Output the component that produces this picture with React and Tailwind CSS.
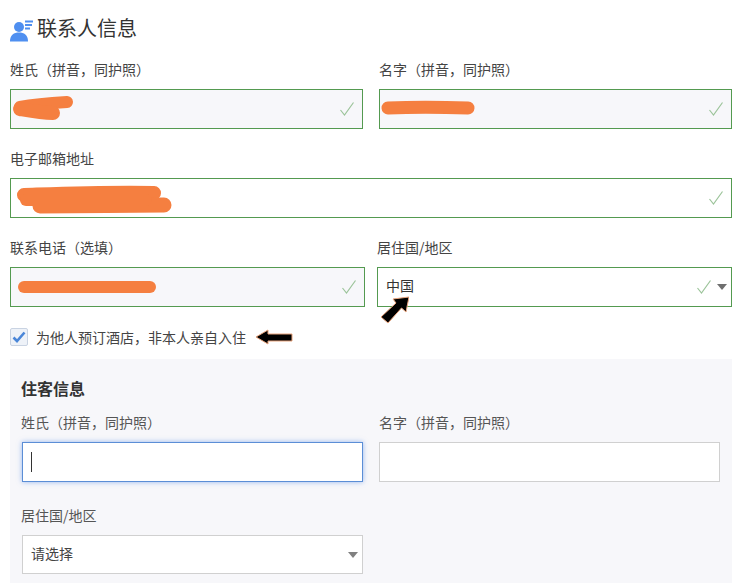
import { useState } from 'react'

const FONT = 'font-["Microsoft_YaHei","Noto_Sans_CJK_SC",sans-serif]'

const NAME_LABEL = '姓氏（拼音，同护照）'
const GIVEN_LABEL = '名字（拼音，同护照）'

function Check() {
  return (
    <svg width="16" height="16" viewBox="0 0 16 16" fill="none" className="shrink-0">
      <path d="M1.5 9 L5.5 14 L14.5 1.5" stroke="#9cc49a" strokeWidth="1.2" />
    </svg>
  )
}

function Caret({ color = '#6f6f6f' }) {
  return (
    <svg width="10" height="6" viewBox="0 0 10 6" className="shrink-0">
      <path d="M0 0 H10 L5 6 Z" fill={color} />
    </svg>
  )
}

// orange marker strokes hiding personal data
function Scribble({ className, width, height, children }) {
  return (
    <svg
      width={width}
      height={height}
      viewBox={`0 0 ${width} ${height}`}
      fill="none"
      stroke="#f57f40"
      strokeLinecap="round"
      className={`absolute blur-[0.6px] ${className}`}
    >
      {children}
    </svg>
  )
}

function Field({ label, filled, select, children, className = '' }) {
  return (
    <div className={`flex flex-col ${className}`}>
      <label className="h-5 leading-5 text-sm text-[#444]">{label}</label>
      <div
        className={`relative mt-[10px] h-10 flex items-center border border-[#549a50] pl-2 text-sm text-[#333] ${filled ? 'bg-[#f7f7fa]' : 'bg-white'} ${select ? 'gap-[5px] pr-[4px]' : 'pr-[7px]'}`}
      >
        <span className="flex-1 pb-[5px]">{children}</span>
        <Check />
        {select && <Caret />}
      </div>
    </div>
  )
}

function PlainField({ label, focused, select, indent = true, children, className = '' }) {
  return (
    <div className={`flex flex-col ${className}`}>
      <label className={`h-5 leading-5 text-sm text-[#555] ${indent ? '-ml-px' : ''}`}>{label}</label>
      <div
        className={`mt-[10px] flex items-center bg-white border pl-2 pr-[4px] text-sm text-[#444] ${select ? 'h-[39px]' : 'h-10'} ${focused ? 'border-[#5b8ed6] shadow-[0_0_5px_rgba(70,130,230,0.55)]' : 'border-[#d0d0d0]'}`}
      >
        {focused ? children : <span className="flex-1 pb-[3px]">{children}</span>}
        {select && <Caret color="#808080" />}
      </div>
    </div>
  )
}

export default function App() {
  const [forOther, setForOther] = useState(true)

  return (
    <div className={`w-[732px] h-[583px] overflow-hidden bg-white pl-[10px] ${FONT}`}>
      <div className="h-[59px] pb-[3px] flex items-center gap-[5px]">
        <svg width="23" height="22" viewBox="0 0 23 22" className="shrink-0 mt-[5px]">
          <circle cx="9" cy="7" r="5" fill="#4f8ff0" />
          <path d="M0 21 C0 15 4 12.5 9 12.5 C14 12.5 18 15 18 21 V21.5 H0 Z" fill="#4f8ff0" />
          <rect x="15" y="0.5" width="8" height="2" fill="#4f8ff0" />
          <rect x="15" y="4" width="7" height="2" fill="#4f8ff0" />
          <rect x="15" y="7.5" width="5" height="2" fill="#4f8ff0" />
        </svg>
        <h1 className="-ml-px text-xl text-[#333]">联系人信息</h1>
      </div>

      <div className="flex flex-col gap-[19px]">
        <div className="flex gap-4">
          <Field label={NAME_LABEL} filled className="w-[353px]">
            <Scribble className="left-0 top-[6px]" width="66" height="26">
              <path d="M9 11 C25 8 40 7 56 6" strokeWidth="12" />
              <path d="M9 13 C20 15 30 17 42 17" strokeWidth="14" />
            </Scribble>
          </Field>
          <Field label={GIVEN_LABEL} filled className="w-[353px]">
            <Scribble className="left-0 top-[8px]" width="98" height="22">
              <path d="M8 10 C30 9 60 9 88 10" strokeWidth="13" />
            </Scribble>
          </Field>
        </div>

        <Field label="电子邮箱地址" className="w-[722px]">
          <Scribble className="left-[5px] top-[6px]" width="160" height="30">
            <path d="M8 10 C40 9 90 7 138 8" strokeWidth="14" />
            <path d="M24 21 C60 21 110 20 148 20" strokeWidth="15" />
            <path d="M10 15 H130" strokeWidth="12" />
          </Scribble>
        </Field>

        <div className="flex gap-3">
          <Field label="联系电话（选填）" filled className="w-[355px]">
            <Scribble className="left-[6px] top-[10px]" width="142" height="18">
              <path d="M7 9 H133" strokeWidth="12" />
            </Scribble>
          </Field>
          <Field label="居住国/地区" select className="w-[355px]">
            中国
            <svg width="30" height="30" viewBox="0 0 30 30" className="absolute left-[1px] top-[28px]">
              <path d="M30 1 L27 16 L22.500 12 L9 27 L2 21 L17 7 L14 3 Z" fill="#000" stroke="#e8a37c" strokeWidth="1" />
            </svg>
          </Field>
        </div>
      </div>

      <label className="h-[52px] pt-[7px] flex items-center gap-2 text-sm text-[#444]">
        <input
          type="checkbox"
          checked={forOther}
          onChange={e => setForOther(e.target.checked)}
          className="sr-only"
        />
        <span className="w-[18px] h-[18px] flex items-center justify-center rounded-[2px] border border-[#c9d3e2] bg-[#eef2f8]">
          {forOther && (
            <svg width="14" height="12" viewBox="0 0 14 12" fill="none">
              <path d="M1.5 6.5 L5 10 L12.5 1.5" stroke="#4a86d8" strokeWidth="2.6" />
            </svg>
          )}
        </span>
        为他人预订酒店，非本人亲自入住
        <svg width="38" height="18" viewBox="0 0 38 18" className="ml-[1px]">
          <path d="M1 9 L13 2 L13 6 L37 6 L37 13 L13 13 L13 16 Z" fill="#000" stroke="#e8a37c" strokeWidth="1" />
        </svg>
      </label>

      <div className="h-[224px] bg-[#f7f7fa] px-3 pt-[18px]">
        <h2 className="-ml-px h-[22px] leading-[22px] text-base font-bold text-[#333]">住客信息</h2>
        <div className="mt-[13px] flex gap-4">
          <PlainField label={NAME_LABEL} focused className="w-[341px]">
            <span className="block w-px h-5 bg-[#333]" />
          </PlainField>
          <PlainField label={GIVEN_LABEL} indent={false} className="w-[341px]" />
        </div>
        <PlainField label="居住国/地区" select className="mt-[23px] w-[341px]">
          请选择
        </PlainField>
      </div>
    </div>
  )
}
